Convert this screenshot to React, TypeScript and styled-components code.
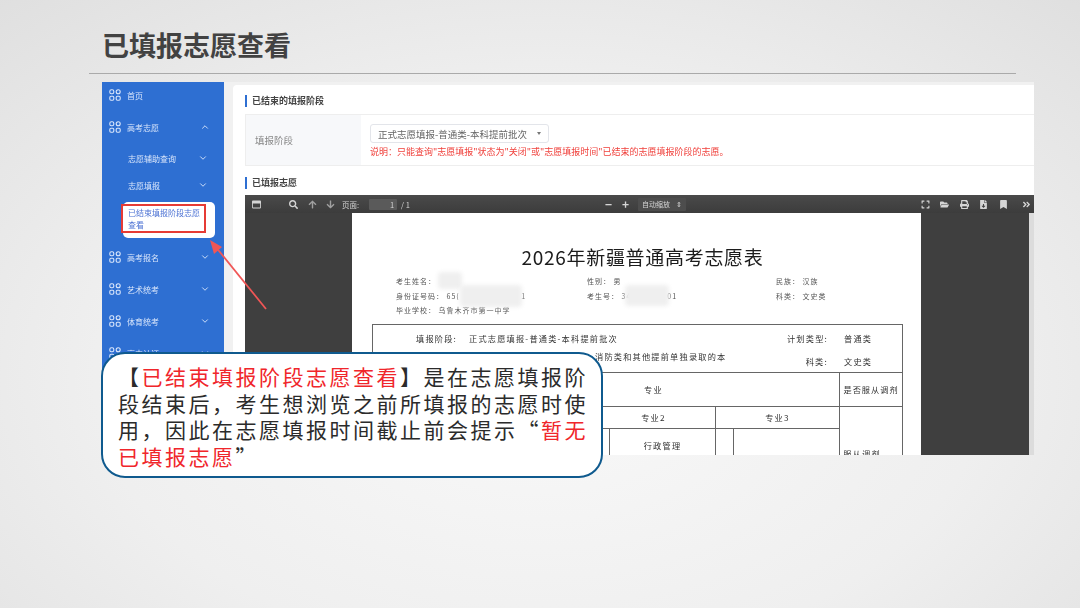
import React from "react";
import styled, { createGlobalStyle } from "styled-components";
import { ChevronDown, ChevronUp } from "lucide-react";
import {
  FaAngleDoubleRight,
  FaArrowDown,
  FaArrowUp,
  FaBookmark,
  FaExpand,
  FaFileDownload,
  FaFolderOpen,
  FaPrint,
  FaRegWindowMaximize,
  FaSearch,
} from "react-icons/fa";

const CJK = `"Noto Sans CJK SC", "Liberation Sans", sans-serif`;

const GlobalStyle = createGlobalStyle`
  html, body {
    margin: 0;
    padding: 0;
    background: #eee;
  }
  body {
    font-family: ${CJK};
  }
`;

const Slide = styled.div`
  position: relative;
  width: 1080px;
  height: 608px;
  overflow: hidden;
  background: radial-gradient(ellipse 75% 85% at 50% 62%, #f9f9f9 0%, #efefef 55%, #dfdfdf 100%);
`;

const Header = styled.header`
  height: 74px;
  margin: 0 64px 0 89px;
  padding: 15px 0 0 13px;
  box-sizing: border-box;
  display: flex;
  align-items: center;
  border-bottom: 1px solid #aaa;
`;

const Title = styled.h1`
  margin: 0;
  font-size: 27px;
  line-height: 1;
  font-weight: 700;
  color: #424242;
`;

const Shot = styled.div`
  margin: 8px 46px 0 102px;
  height: 373px;
  display: flex;
  overflow: hidden;
  filter: blur(0.35px);
`;

const Sidebar = styled.nav`
  width: 122px;
  flex: none;
  padding-top: 3px;
  box-sizing: border-box;
  background: #2e6fd2;
  color: #d9e6fb;
  font-size: 8px;
`;

const NavRow = styled.div<{ $open?: boolean }>`
  height: 20px;
  margin-bottom: ${(p) => (p.$open ? 11 : 12)}px;
  padding: 0 14px 0 7px;
  display: flex;
  align-items: center;
  gap: 6px;
  span {
    flex: 1;
  }
`;

const SubRow = styled.div`
  height: 20px;
  margin-bottom: 7px;
  padding: 0 16px 0 26px;
  display: flex;
  align-items: center;
  justify-content: space-between;
`;

const ActiveCard = styled.div`
  position: relative;
  width: 92px;
  height: 36px;
  margin: 0 0 9px 21px;
  padding: 5px 4px 0 5px;
  box-sizing: border-box;
  background: #fff;
  border-radius: 5px;
  color: #4c72d4;
  line-height: 12px;
`;

const RedFrame = styled.span`
  position: absolute;
  left: -2px;
  top: 2px;
  width: 85px;
  height: 29px;
  box-sizing: border-box;
  border: 2px solid #e63b35;
`;

const Main = styled.main`
  flex: 1;
  min-width: 0;
  padding: 3px 0 0 9px;
  background: #f1f1f1;
`;

const Panel = styled.section`
  height: 100%;
  padding: 10px 0 0 12px;
  box-sizing: border-box;
  background: #fff;
  border-radius: 4px 0 0 0;
`;

const SectionHead = styled.h2<{ $gap?: number }>`
  height: 12px;
  margin: ${(p) => p.$gap ?? 0}px 0 0;
  padding-left: 5px;
  border-left: 2.5px solid #2e6fd2;
  font-size: 9px;
  line-height: 12px;
  font-weight: 700;
  color: #444;
`;

const FormBox = styled.div`
  height: 52px;
  margin-top: 7px;
  box-sizing: border-box;
  display: grid;
  grid-template-columns: 115px 1fr;
  border-top: 1px solid #eee;
  border-bottom: 1px solid #eee;
  border-left: 1px solid #eee;
`;

const FormLabel = styled.div`
  display: flex;
  align-items: center;
  padding-left: 9px;
  background: #f7f8fa;
  color: #888;
  font-size: 9.5px;
`;

const FormValue = styled.div`
  padding: 9px 0 0 9px;
`;

const SelectBox = styled.div`
  width: 179px;
  height: 19px;
  padding: 0 7px;
  box-sizing: border-box;
  display: flex;
  align-items: center;
  justify-content: space-between;
  border: 1px solid #e3e5ea;
  border-radius: 3px;
  color: #666;
  font-size: 9.5px;
  i {
    width: 0;
    height: 0;
    border-left: 2px solid transparent;
    border-right: 2px solid transparent;
    border-top: 3px solid #777;
  }
`;

const Note = styled.div`
  margin-top: 2px;
  color: #f0413c;
  font-size: 9px;
  line-height: 13px;
  white-space: nowrap;
`;

const Viewer = styled.div`
  height: 260px;
  margin-top: 6px;
  display: flex;
  flex-direction: column;
  background: #3f3f3f;
  overflow: hidden;
`;

const Toolbar = styled.div`
  height: 18px;
  flex: none;
  display: grid;
  grid-template-columns: 1fr auto 1fr;
  align-items: center;
  background: linear-gradient(#4a4a4a, #3c3c3c);
  color: #d5d5d5;
  font-size: 7.5px;
`;

const ToolGroup = styled.div<{ $end?: boolean; $shift?: number }>`
  display: flex;
  align-items: center;
  justify-content: ${(p) => (p.$end ? "flex-end" : "flex-start")};
  margin-left: ${(p) => p.$shift ?? 0}px;
  svg {
    flex: none;
  }
`;

const ToolSlot = styled.span<{ $w: number }>`
  width: ${(p) => p.$w}px;
  flex: none;
  display: flex;
  align-items: center;
  justify-content: center;
`;

const ZoomButton = styled(ToolSlot)`
  font-size: 12px;
  line-height: 1;
  font-weight: 700;
`;

const PageInput = styled.span`
  width: 28px;
  height: 11px;
  margin: 0 4px 0 10px;
  padding-right: 3px;
  box-sizing: border-box;
  background: #5a5a5a;
  border-radius: 1px;
  text-align: right;
  line-height: 11px;
`;

const ZoomSelect = styled.span`
  width: 48px;
  height: 13px;
  margin-left: 4px;
  padding: 0 4px;
  box-sizing: border-box;
  display: flex;
  justify-content: space-between;
  align-items: center;
  background: #4d4d4d;
  border-radius: 1px;
  font-size: 7px;
`;

const ViewerBody = styled.div`
  flex: 1;
  min-height: 0;
  display: flex;
  padding-left: 107px;
`;

const Page = styled.div`
  position: relative;
  width: 569px;
  flex: none;
  padding: 32px 19px 0 20px;
  box-sizing: border-box;
  background: #fff;
  color: #333;
  overflow: hidden;
`;

const Gutter = styled.div`
  flex: 1;
`;

const Scrollbar = styled.div`
  width: 5px;
  flex: none;
  background: #dcdcdc;
`;

const PaperTitle = styled.div`
  height: 24px;
  padding-left: 11px;
  text-align: center;
  color: #1c1c1c;
  font-size: 19px;
  line-height: 24px;
  letter-spacing: 0.7px;
  white-space: nowrap;
`;

const MetaGrid = styled.div`
  margin-top: 5px;
  padding-left: 24px;
  display: grid;
  grid-template-columns: 191px 189px 1fr;
  grid-auto-rows: 14.5px;
  align-items: center;
  font-size: 7px;
  letter-spacing: 1px;
  color: #555;
  white-space: pre;
`;

const Smudge = styled.span<{ $x: number; $y: number; $w: number; $h: number }>`
  position: absolute;
  left: ${(p) => p.$x}px;
  top: ${(p) => p.$y}px;
  width: ${(p) => p.$w}px;
  height: ${(p) => p.$h}px;
  background: #efefef;
  border-radius: 4px;
  filter: blur(2px);
`;

const PaperTable = styled.table`
  width: 531px;
  margin-top: 6px;
  table-layout: fixed;
  border-collapse: collapse;
  font-size: 8.2px;
  letter-spacing: 1.2px;
  color: #333;
  td {
    padding: 0;
    border: 1px solid #666;
    text-align: center;
    vertical-align: middle;
  }
`;

const Col = styled.col<{ $w: number }>`
  width: ${(p) => p.$w}px;
`;

const Row = styled.tr<{ $h: number }>`
  height: ${(p) => p.$h}px;
`;

const AdjustHead = styled.td`
  letter-spacing: 1px;
`;

const AdjustValue = styled.td`
  && {
    padding-right: 18px;
  }
`;

const MajorCell = styled.td`
  && {
    vertical-align: top;
    padding-top: 10px;
  }
`;

const InfoGrid = styled.div`
  height: 47px;
  display: grid;
  grid-template-columns: 413px 42px 1fr;
  grid-template-rows: 26px 21px;
  align-items: center;
  text-align: left;
  white-space: nowrap;
`;

const InfoLeft = styled.div<{ $pad: number; $raise?: number }>`
  padding-left: ${(p) => p.$pad}px;
  padding-bottom: ${(p) => p.$raise ?? 0}px;
  b {
    font-weight: 400;
    margin-right: 12px;
  }
`;

const InfoLabel = styled.div`
  text-align: right;
`;

const InfoValue = styled.div`
  padding-left: 16px;
`;

const ArrowLayer = styled.svg`
  position: absolute;
  left: 200px;
  top: 230px;
`;

const Callout = styled.aside`
  position: absolute;
  left: 101px;
  top: 352px;
  width: 502px;
  height: 126px;
  padding: 9px 8px 0 15px;
  box-sizing: border-box;
  background: #fff;
  border: 2.5px solid #0f5a8e;
  border-radius: 24px;
  color: #2b2b2b;
  font-size: 21px;
  line-height: 26.5px;
  letter-spacing: 2.5px;
  em {
    font-style: normal;
    color: #f0262b;
  }
`;

const GridIcon = () => (
  <svg width="12" height="12" viewBox="0 0 12 12" fill="none" stroke="#dbe7fb" strokeWidth="1.1">
    <rect x="0.8" y="0.8" width="4" height="4" rx="1.6" />
    <circle cx="9.2" cy="2.8" r="2" />
    <rect x="0.8" y="7.2" width="4" height="4" rx="1.2" />
    <rect x="7.2" y="7.2" width="4" height="4" rx="1.2" />
  </svg>
);

const navAfter = ["高考报名", "艺术统考", "体育统考", "高中认证"];
const colWidths = [95, 18, 106, 18, 106, 18, 106, 63];

const App: React.FC = () => {
  return (
    <Slide>
      <GlobalStyle />
      <Header>
        <Title>已填报志愿查看</Title>
      </Header>
      <Shot>
        <Sidebar>
          <NavRow>
            <GridIcon />
            <span>首页</span>
          </NavRow>
          <NavRow $open>
            <GridIcon />
            <span>高考志愿</span>
            <ChevronUp size={10} strokeWidth={2.2} />
          </NavRow>
          <SubRow>
            志愿辅助查询
            <ChevronDown size={10} strokeWidth={2.2} />
          </SubRow>
          <SubRow>
            志愿填报
            <ChevronDown size={10} strokeWidth={2.2} />
          </SubRow>
          <ActiveCard>
            已结束填报阶段志愿
            <br />
            查看
            <RedFrame />
          </ActiveCard>
          {navAfter.map((name) => (
            <NavRow key={name}>
              <GridIcon />
              <span>{name}</span>
              <ChevronDown size={10} strokeWidth={2.2} />
            </NavRow>
          ))}
        </Sidebar>
        <Main>
          <Panel>
            <SectionHead>已结束的填报阶段</SectionHead>
            <FormBox>
              <FormLabel>填报阶段</FormLabel>
              <FormValue>
                <SelectBox>
                  正式志愿填报-普通类-本科提前批次
                  <i />
                </SelectBox>
                <Note>
                  说明：只能查询"志愿填报"状态为"关闭"或"志愿填报时间"已结束的志愿填报阶段的志愿。
                </Note>
              </FormValue>
            </FormBox>
            <SectionHead $gap={11}>已填报志愿</SectionHead>
            <Viewer>
              <Toolbar>
                <ToolGroup>
                  <ToolSlot $w={22}>
                    <FaRegWindowMaximize size={9} />
                  </ToolSlot>
                  <ToolSlot $w={21} />
                  <ToolSlot $w={10}>
                    <FaSearch size={9} />
                  </ToolSlot>
                  <ToolSlot $w={28}>
                    <FaArrowUp size={9} color="#a0a0a0" />
                  </ToolSlot>
                  <ToolSlot $w={8}>
                    <FaArrowDown size={9} color="#a0a0a0" />
                  </ToolSlot>
                  <ToolSlot $w={8} />
                  页面:
                  <PageInput>1</PageInput>/ 1
                </ToolGroup>
                <ToolGroup $shift={7}>
                  <ZoomButton $w={17}>−</ZoomButton>
                  <ZoomButton $w={17}>+</ZoomButton>
                  <ZoomSelect>
                    自动缩放
                    <span>⇕</span>
                  </ZoomSelect>
                </ToolGroup>
                <ToolGroup $end>
                  <ToolSlot $w={19.5}>
                    <FaExpand size={9} />
                  </ToolSlot>
                  <ToolSlot $w={19.5}>
                    <FaFolderOpen size={9} />
                  </ToolSlot>
                  <ToolSlot $w={19.5}>
                    <FaPrint size={9} />
                  </ToolSlot>
                  <ToolSlot $w={19.5}>
                    <FaFileDownload size={9} />
                  </ToolSlot>
                  <ToolSlot $w={19.5}>
                    <FaBookmark size={9} />
                  </ToolSlot>
                  <ToolSlot $w={5} />
                  <ToolSlot $w={16}>
                    <FaAngleDoubleRight size={9} />
                  </ToolSlot>
                </ToolGroup>
              </Toolbar>
              <ViewerBody>
                <Page>
                  <PaperTitle>2026年新疆普通高考志愿表</PaperTitle>
                  <MetaGrid>
                    <div>考生姓名：</div>
                    <div>性别： 男</div>
                    <div>民族： 汉族</div>
                    <div>身份证号码： 65(                        1</div>
                    <div>考生号： 34              01</div>
                    <div>科类： 文史类</div>
                    <div>毕业学校： 乌鲁木齐市第一中学</div>
                  </MetaGrid>
                  <PaperTable>
                    <colgroup>
                      {colWidths.map((w, i) => (
                        <Col key={i} $w={w} />
                      ))}
                    </colgroup>
                    <tbody>
                      <tr>
                        <td colSpan={8}>
                          <InfoGrid>
                            <InfoLeft $pad={43}>
                              <b>填报阶段:</b>
                              正式志愿填报-普通类-本科提前批次
                            </InfoLeft>
                            <InfoLabel>计划类型:</InfoLabel>
                            <InfoValue>普通类</InfoValue>
                            <InfoLeft $pad={222} $raise={10}>
                              消防类和其他提前单独录取的本
                            </InfoLeft>
                            <InfoLabel>科类:</InfoLabel>
                            <InfoValue>文史类</InfoValue>
                          </InfoGrid>
                        </td>
                      </tr>
                      <Row $h={34}>
                        <td />
                        <td colSpan={6}>专业</td>
                        <AdjustHead>是否服从调剂</AdjustHead>
                      </Row>
                      <Row $h={22}>
                        <td />
                        <td colSpan={2}>专业1</td>
                        <td colSpan={2}>专业2</td>
                        <td colSpan={2}>专业3</td>
                        <AdjustValue rowSpan={2}>服从调剂</AdjustValue>
                      </Row>
                      <Row $h={72}>
                        <td />
                        <td />
                        <td />
                        <td />
                        <MajorCell>行政管理</MajorCell>
                        <td />
                        <td />
                      </Row>
                    </tbody>
                  </PaperTable>
                  <Smudge $x={86} $y={59} $w={24} $h={17} />
                  <Smudge $x={108} $y={72} $w={62} $h={22} />
                  <Smudge $x={273} $y={72} $w={44} $h={21} />
                </Page>
                <Gutter />
                <Scrollbar />
              </ViewerBody>
            </Viewer>
          </Panel>
        </Main>
      </Shot>
      <ArrowLayer width="80" height="90" viewBox="0 0 80 90">
        <path d="M66 79 L15 16" stroke="#f05656" strokeWidth="1.8" fill="none" />
        <path d="M10 10 L22 17 L14 24 Z" fill="#f05656" />
      </ArrowLayer>
      <Callout>
        【<em>已结束填报阶段志愿查看</em>】是在志愿填报阶段结束后，考生想浏览之前所填报的志愿时使用，因此在志愿填报时间截止前会提示“<em>暂无已填报志愿</em>”
      </Callout>
    </Slide>
  );
};

export default App;
